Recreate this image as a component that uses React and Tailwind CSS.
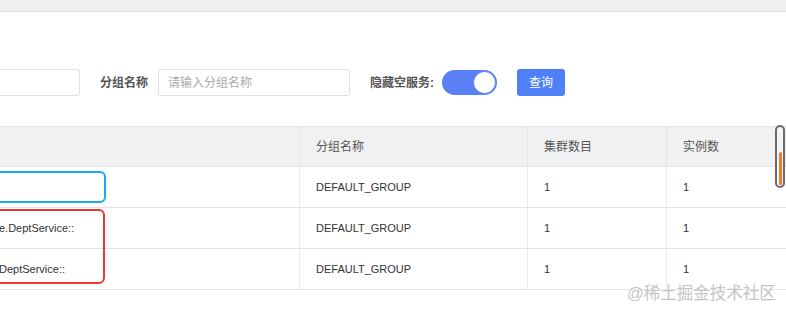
import React from 'react';

const font = { fontFamily: '"Liberation Sans", "Noto Sans CJK SC", sans-serif' };

const rows = [
  { name: '', group: 'DEFAULT_GROUP', clusters: 1, instances: 1 },
  { name: 'e.DeptService::', group: 'DEFAULT_GROUP', clusters: 1, instances: 1 },
  { name: 'DeptService::', group: 'DEFAULT_GROUP', clusters: 1, instances: 1 },
];

const App = () => {
  return (
    <div className="relative w-[786px] h-[313px] overflow-hidden bg-white" style={font}>
      {/* top band */}
      <div className="h-[12px] bg-[#f0f0f0] border-b border-[#dcdcdc]" />

      {/* filter row */}
      <div className="flex items-center mt-[57px] h-[27px]">
        <div className="w-[110px] -ml-[30px] h-[27px] border border-[#dcdfe6] rounded-[3px] shrink-0" />
        <span className="ml-[20px] text-[12px] font-bold text-[#555] whitespace-nowrap">分组名称</span>
        <div className="ml-[10px] w-[192px] h-[27px] border border-[#dcdfe6] rounded-[3px] flex items-center pl-[9px] text-[12px] text-[#aaa]">
          请输入分组名称
        </div>
        <span className="ml-[20px] text-[12px] font-bold text-[#555] whitespace-nowrap">隐藏空服务:</span>
        <div className="ml-[8px] w-[55px] h-[25px] rounded-full bg-[#5a7ff7] flex items-center justify-end pr-[1px]">
          <div className="w-[23px] h-[23px] rounded-full bg-white border border-[#5a7ff7]" />
        </div>
        <button className="ml-[20px] w-[48px] h-[27px] rounded-[3px] bg-[#4f80f7] text-white text-[12px]">查询</button>
      </div>

      {/* table */}
      <div className="mt-[30px] border-t border-[#e4e4e4]">
        <div className="grid grid-cols-[300px_228px_139px_1fr] h-[40px] bg-[#f0f1f3] border-b border-[#e4e4e4] text-[12px] text-[#555]">
          <div className="border-r border-[#e6e6e6]" />
          <div className="flex items-center pl-[16px] border-r border-[#e6e6e6]">分组名称</div>
          <div className="flex items-center pl-[16px] border-r border-[#e6e6e6]">集群数目</div>
          <div className="flex items-center pl-[16px]">实例数</div>
        </div>
        {rows.map((r, i) => (
          <div key={i} className="grid grid-cols-[300px_228px_139px_1fr] h-[41px] border-b border-[#e4e4e4] text-[11px] text-[#333]">
            <div className="flex items-center border-r border-[#ececec] whitespace-nowrap -ml-[1px]">{r.name}</div>
            <div className="flex items-center pl-[16px] border-r border-[#ececec]">{r.group}</div>
            <div className="flex items-center pl-[16px] border-r border-[#ececec]">{r.clusters}</div>
            <div className="flex items-center pl-[16px]">{r.instances}</div>
          </div>
        ))}
      </div>

      {/* annotation boxes */}
      <div className="absolute left-[-10px] top-[171px] w-[116px] h-[32px] border-2 border-[#1ea7ea] rounded-[6px]" />
      <div className="absolute left-[-10px] top-[209px] w-[115px] h-[75px] border-2 border-[#e8392a] rounded-[6px]" />

      {/* scrollbar */}
      <div className="absolute left-[775px] top-[125px] w-[10px] h-[63px] rounded-full border-2 border-[#6b6b6b] bg-[#f4f4f4]">
        <div className="absolute left-[2px] top-[25px] w-[3px] h-[33px] rounded-full bg-[#f07b2a]" />
      </div>

      {/* watermark */}
      <div className="absolute left-[627px] top-[281px] text-[16.5px] text-[#c4c4c4] whitespace-nowrap" style={{ textShadow: '0 0 2px #fff' }}>
        @稀土掘金技术社区
      </div>
    </div>
  );
};

export default App;
